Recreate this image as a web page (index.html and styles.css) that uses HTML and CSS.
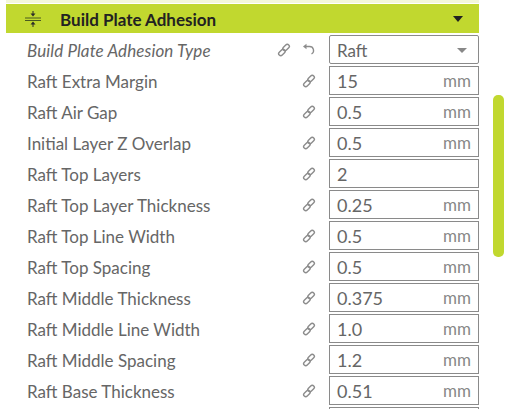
FILE: index.html
```html
<!DOCTYPE html>
<html>
<head>
    <title>Build Plate Adhesion</title>
    <link rel="stylesheet" href="styles.css">
</head>
<body>
    <svg class="icon-defs" width="0" height="0">
        <symbol id="link" viewBox="0 0 14 14">
            <g fill="none" stroke="#8c8c8c" stroke-width="1.4">
                <rect x="7" y="0.8" width="4.2" height="7.4" rx="2.1" transform="rotate(45 9.1 4.5)"/>
                <rect x="2.800" y="5.800" width="4.2" height="7.4" rx="2.1" transform="rotate(45 4.900 9.500)"/>
            </g>
        </symbol>
    </svg>

    <div class="top-strip"></div>
    <div class="panel">
        <div class="section-header">
            <svg class="section-icon" width="16" height="18" viewBox="0 0 16 18">
                <path d="M0 8h16M0 10.500h16" stroke="#4a5a20" stroke-width="1" fill="none"/>
                <path d="M8 1v3M8 14v3" stroke="#2b2b2b" stroke-width="1" fill="none"/>
                <path d="M5.500 3.500h5L8 6.500zM5.500 14.500h5L8 11.500z" fill="#2b2b2b"/>
            </svg>
            <span class="section-title">Build Plate Adhesion</span>
            <span class="section-arrow"></span>
        </div>

        <div class="row">
            <span class="label label-changed">Build Plate Adhesion Type</span>
            <svg class="link link-shifted"><use href="#link"/></svg>
            <svg class="undo" width="14" height="14" viewBox="0 0 14 14">
                <path d="M4 3.500h3.500a4 4 0 0 1 2 7.500" fill="none" stroke="#8c8c8c" stroke-width="1.300"/>
                <path d="M4.500 0.800v5.400L1 3.500z" fill="#8c8c8c"/>
            </svg>
            <div class="field field-select"><span>Raft</span><span class="select-arrow"></span></div>
        </div>
        <div class="row">
            <span class="label">Raft Extra Margin</span>
            <svg class="link"><use href="#link"/></svg>
            <div class="field"><span>15</span><span class="unit">mm</span></div>
        </div>
        <div class="row">
            <span class="label">Raft Air Gap</span>
            <svg class="link"><use href="#link"/></svg>
            <div class="field"><span>0.5</span><span class="unit">mm</span></div>
        </div>
        <div class="row">
            <span class="label">Initial Layer Z Overlap</span>
            <svg class="link"><use href="#link"/></svg>
            <div class="field"><span>0.5</span><span class="unit">mm</span></div>
        </div>
        <div class="row">
            <span class="label">Raft Top Layers</span>
            <svg class="link"><use href="#link"/></svg>
            <div class="field"><span>2</span></div>
        </div>
        <div class="row">
            <span class="label">Raft Top Layer Thickness</span>
            <svg class="link"><use href="#link"/></svg>
            <div class="field"><span>0.25</span><span class="unit">mm</span></div>
        </div>
        <div class="row">
            <span class="label">Raft Top Line Width</span>
            <svg class="link"><use href="#link"/></svg>
            <div class="field"><span>0.5</span><span class="unit">mm</span></div>
        </div>
        <div class="row">
            <span class="label">Raft Top Spacing</span>
            <svg class="link"><use href="#link"/></svg>
            <div class="field"><span>0.5</span><span class="unit">mm</span></div>
        </div>
        <div class="row">
            <span class="label">Raft Middle Thickness</span>
            <svg class="link"><use href="#link"/></svg>
            <div class="field"><span>0.375</span><span class="unit">mm</span></div>
        </div>
        <div class="row">
            <span class="label">Raft Middle Line Width</span>
            <svg class="link"><use href="#link"/></svg>
            <div class="field"><span>1.0</span><span class="unit">mm</span></div>
        </div>
        <div class="row">
            <span class="label">Raft Middle Spacing</span>
            <svg class="link"><use href="#link"/></svg>
            <div class="field"><span>1.2</span><span class="unit">mm</span></div>
        </div>
        <div class="row">
            <span class="label">Raft Base Thickness</span>
            <svg class="link"><use href="#link"/></svg>
            <div class="field"><span>0.51</span><span class="unit">mm</span></div>
        </div>
        <div class="row">
            <span class="label"></span>
            <div class="field"></div>
        </div>
    </div>

    <div class="scrollbar"></div>
</body>
</html>
```

FILE: styles.css
```css
html, body {
    height: 100%;
    overflow: hidden;
}
body {
    margin: 0;
    background: white;
    font-family: Lato, sans-serif;
    font-size: 17px;
    color: #666;
}
.icon-defs {
    position: absolute;
}
.top-strip {
    height: 3px;
    margin-left: 6px;
    width: 473px;
    background: #f3f7d9;
}
.panel {
    margin-top: 1px;
    margin-left: 6px;
    width: 473px;
    height: 405px;
    overflow: hidden;
}
.section-header {
    display: flex;
    align-items: center;
    height: 29px;
    background: #c1d82f;
    color: #222;
    font-weight: 700;
    padding-left: 19px;
    margin-bottom: 2px;
}
.section-title {
    margin-left: 19px;
    flex: 1;
    padding-top: 2px;
}
.section-arrow {
    width: 0;
    height: 0;
    border-left: 5.5px solid transparent;
    border-right: 5.5px solid transparent;
    border-top: 6px solid #222;
    margin-right: 16px;
}
.row {
    display: flex;
    align-items: center;
    height: 29px;
    margin-bottom: 2px;
    padding-left: 21px;
}
.label {
    flex: 1;
    white-space: nowrap;
    padding-top: 2px;
}
.label-changed {
    font-style: italic;
    letter-spacing: 0.1px;
}
.link {
    width: 14px;
    height: 14px;
    margin-right: 13px;
}
.link-shifted {
    margin-right: 12px;
}
.undo {
    margin-right: 13px;
    margin-left: -1px;
}
.field {
    display: flex;
    justify-content: space-between;
    align-items: center;
    box-sizing: border-box;
    width: 150px;
    height: 29px;
    border: 1.5px solid #8a8a8a;
    padding: 0 7px;
    font-size: 18px;
}
.field-select {
    border-radius: 2px;
    padding-right: 11px;
    padding-top: 1px;
    font-size: 17px;
}
.unit {
    color: #888;
    font-size: 17px;
}
.select-arrow {
    width: 0;
    height: 0;
    border-left: 5.5px solid transparent;
    border-right: 5.5px solid transparent;
    border-top: 5px solid #888;
}
.scrollbar {
    position: absolute;
    left: 493px;
    top: 95px;
    width: 11px;
    height: 162px;
    border-radius: 5px;
    background: #c1d82f;
}
```
